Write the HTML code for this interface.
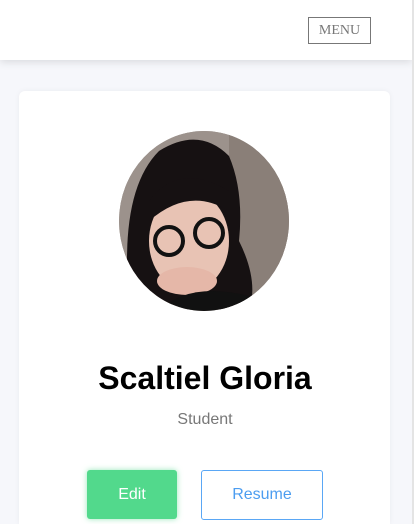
<!DOCTYPE html>
<html><head><style>
html,body{margin:0;padding:0;width:414px;height:524px;overflow:hidden;background:#f6f7fb;font-family:"Liberation Sans",sans-serif;}
.hdr{position:absolute;left:0;top:0;width:412px;height:60px;background:#fff;box-shadow:0 2px 8px rgba(0,0,0,.12);}
.menu{position:absolute;left:308px;top:17px;width:61px;height:25px;border:1px solid #777;color:#777;font-family:"Liberation Serif",serif;font-size:14px;text-align:center;line-height:25px;}
.edge{position:absolute;right:0;top:0;width:2px;height:524px;background:#e4e4e4;}
.card{position:absolute;left:19px;top:91px;width:371px;height:433px;background:#fff;border-radius:6px 6px 0 0;box-shadow:0 0 6px rgba(0,0,0,.05);}
.av{position:absolute;left:119px;top:131px;width:170px;height:180px;border-radius:50%;overflow:hidden;background:#9a8f89;}
h1{position:absolute;left:0;width:410px;top:360px;margin:0;text-align:center;font-size:32px;font-weight:bold;color:#000;}
.role{position:absolute;left:0;width:410px;top:411px;text-align:center;font-size:16px;color:#777;}
.edit{position:absolute;left:87px;top:470px;width:90px;height:49px;background:#52d98c;border-radius:3px;color:#fff;font-size:16px;text-align:center;line-height:49px;box-shadow:0 0 6px rgba(82,217,140,.6);}
.res{position:absolute;left:201px;top:470px;width:120px;height:48px;border:1px solid #5aa7f5;border-radius:3px;color:#4c9df0;font-size:16px;text-align:center;line-height:48px;}
</style></head><body>
<div class="hdr"><div class="menu">MENU</div></div>
<div class="edge"></div>
<div class="card"></div>
<div class="av"><svg width="170" height="180" viewBox="0 0 170 180">
<rect width="170" height="180" fill="#9c928c"/>
<rect x="110" width="60" height="180" fill="#8a7f78"/>
<path d="M10 170 Q0 60 40 20 Q80 -5 110 25 Q125 60 120 110 Q140 150 130 180 Z" fill="#161112"/>
<ellipse cx="70" cy="110" rx="40" ry="50" fill="#e8c3b4"/>
<path d="M30 70 Q60 30 110 60 L110 80 Q70 55 30 90 Z" fill="#161112"/>
<circle cx="50" cy="110" r="14" fill="none" stroke="#111" stroke-width="4"/>
<circle cx="90" cy="102" r="14" fill="none" stroke="#111" stroke-width="4"/>
<ellipse cx="68" cy="150" rx="30" ry="14" fill="#e5b7a8"/>
<path d="M40 180 Q70 150 130 165 L140 180 Z" fill="#111"/>
</svg></div>
<h1>Scaltiel Gloria</h1>
<div class="role">Student</div>
<div class="edit">Edit</div>
<div class="res">Resume</div>
</body></html>
